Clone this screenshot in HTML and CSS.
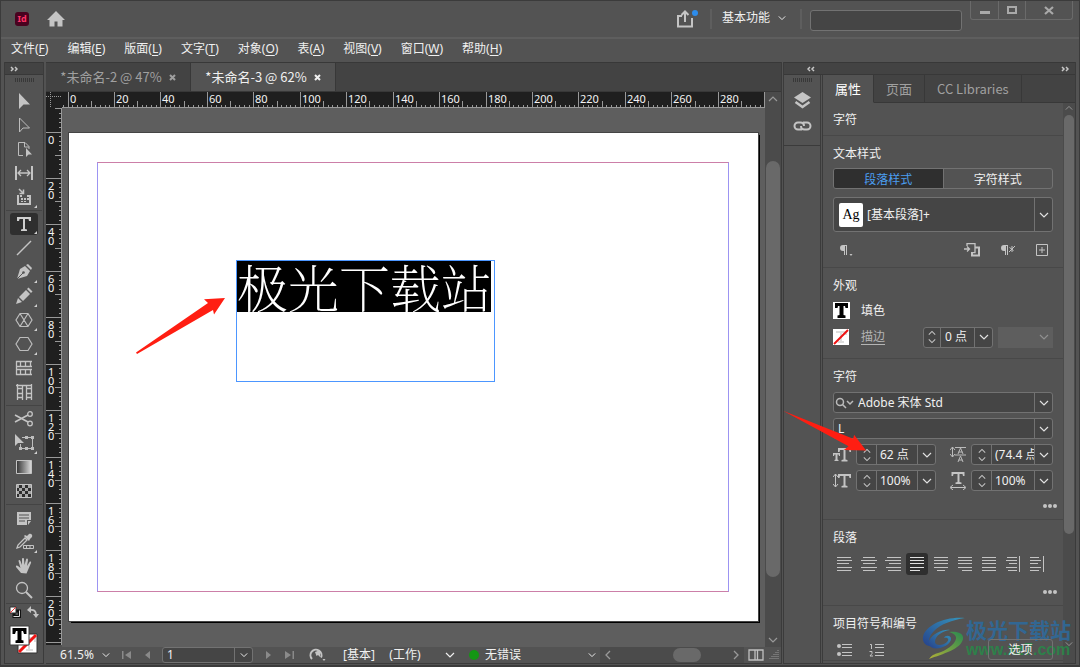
FILE: index.html
```html
<!DOCTYPE html>
<html lang="zh-CN">
<head>
<meta charset="utf-8">
<title>InDesign</title>
<link rel="stylesheet" href="styles.css">
</head>
<body>
<svg class="defs" aria-hidden="true">
  <symbol id="chev" viewBox="0 0 10 6"><path d="M1 1l4 4 4-4" fill="none" stroke="currentColor" stroke-width="1.2"/></symbol>
  <symbol id="step" viewBox="0 0 10 16"><path d="M1 5l4-4 4 4M1 11l4 4 4-4" fill="none" stroke="currentColor" stroke-width="1.3"/></symbol>
  <symbol id="rr" viewBox="0 0 8 6"><path d="M1 1l2 2-2 2M5 1l2 2-2 2" fill="none" stroke="currentColor" stroke-width="1.5"/></symbol>
  <symbol id="ll" viewBox="0 0 8 6"><path d="M3 1L1 3l2 2M7 1L5 3l2 2" fill="none" stroke="currentColor" stroke-width="1.5"/></symbol>
</svg>

<header class="titlebar">
  <span class="logo">Id</span>
  <button class="plain" aria-label="主页"><svg width="18" height="16" viewBox="0 0 18 16"><path d="M9 0L0 9h2.500v6.500h5v-5h3v5h5V9H18z" fill="#c4c4c4"/></svg></button>
  <span class="grow"></span>
  <button class="plain share" aria-label="共享"><svg width="22" height="20" viewBox="0 0 22 20"><path d="M6 7H2v10.500h14V9M9 13V3M5.500 6L9 2.500 12.500 6" fill="none" stroke="#c4c4c4" stroke-width="2"/><circle cx="19" cy="4" r="3" fill="#2d8ceb"/></svg></button>
  <span class="vbar"></span>
  <button class="plain workspace">基本功能 <svg width="8" height="6"><use href="#chev"/></svg></button>
  <span class="vbar"></span>
  <input class="search" type="search" aria-label="搜索">
  <div class="winbtns">
    <button aria-label="最小化"><svg width="10" height="8"><path d="M0 5h10v3H0z" fill="#a9a9a9"/></svg></button>
    <button aria-label="最大化"><svg width="10" height="8"><path d="M1 1h8v6H1z" fill="none" stroke="#a9a9a9" stroke-width="2"/></svg></button>
    <button class="close" aria-label="关闭"><svg width="10" height="9"><path d="M1 1l8 7M9 1L1 8" stroke="#a9a9a9" stroke-width="2.200"/></svg></button>
  </div>
</header>

<nav class="menubar">
  <button>文件(<u>F</u>)</button><button>编辑(<u>E</u>)</button><button>版面(<u>L</u>)</button><button>文字(<u>T</u>)</button><button>对象(<u>O</u>)</button><button>表(<u>A</u>)</button><button>视图(<u>V</u>)</button><button>窗口(<u>W</u>)</button><button>帮助(<u>H</u>)</button>
</nav>

<main class="work">
  <aside class="tools">
    <div class="strip"><svg width="8" height="6"><use href="#rr"/></svg></div>
    <div class="grip"></div>
    <button aria-label="选择工具"><svg width="20" height="20" viewBox="0 0 20 20"><path d="M5 2v16l4.500-4.500H16z" fill="#c4c4c4"/></svg></button>
    <button aria-label="直接选择工具"><svg width="20" height="20" viewBox="0 0 20 20"><path d="M5.500 3v14l3.500-4h6.500z" fill="none" stroke="#bdbdbd"/></svg></button>
    <button aria-label="页面工具"><svg width="20" height="20" viewBox="0 0 20 20"><path d="M9 16.500H4.500v-13H11l4 4V10M10.500 3.500V8H15" fill="none" stroke="#bdbdbd"/><path d="M12 9v9l2.500-2.500H18z" fill="#c4c4c4"/></svg></button>
    <button aria-label="间隙工具"><svg width="20" height="20" viewBox="0 0 20 20"><path d="M2 3v14M18 3v14" stroke="#c4c4c4" stroke-width="2"/><path d="M4 10h12M7 7l-3 3 3 3M13 7l3 3-3 3" fill="none" stroke="#c4c4c4" stroke-width="1.300"/></svg></button>
    <button class="more" aria-label="内容收集器"><svg width="20" height="20" viewBox="0 0 20 20"><path d="M4 8v9h12V8" fill="none" stroke="#c4c4c4" stroke-width="2"/><path d="M7 11h2v2H7zm3 0h2v2h-2zm3-3h2v2h-2zM7 14h2v1H7zm3 0h2v1h-2zm3-3h2v2h-2zM6 8h2v2H6z" fill="#c4c4c4"/><path d="M5 2l4 4M9.500 2.500v4h-4" stroke="#c4c4c4" fill="none" stroke-width="1.500"/></svg></button>
    <hr>
    <button class="more on" aria-label="文字工具"><svg width="20" height="20" viewBox="0 0 20 20"><path d="M3 3h14v4h-2l-.5-2H11v10l2 .5V17H7v-1.500l2-.5V5H5.500L5 7H3z" fill="#d0d0d0"/></svg></button>
    <button aria-label="直线工具"><svg width="20" height="20" viewBox="0 0 20 20"><path d="M3 17L17 3" stroke="#c4c4c4" stroke-width="1.400"/></svg></button>
    <button class="more" aria-label="钢笔工具"><svg width="20" height="20" viewBox="0 0 20 20"><path d="M11 4l5 5-3 5-10 3L6 7z" fill="#c4c4c4"/><path d="M12 3l2-1 4 4-1 2z" fill="#c4c4c4"/><path d="M3 17l6-6" stroke="#535353"/><circle cx="9.500" cy="10.500" r="1.300" fill="#535353"/></svg></button>
    <button class="more" aria-label="铅笔工具"><svg width="20" height="20" viewBox="0 0 20 20"><path d="M2 18l2-6 4 4zM5 11l7-7 4 4-7 7zM13 3l1.500-1.500 4 4L17 7z" fill="#c4c4c4"/></svg></button>
    <button class="more" aria-label="矩形框架工具"><svg width="20" height="20" viewBox="0 0 20 20"><path d="M6 3.500h8l4 6.500-4 6.500H6L2 10zM6 3.500l8 13M14 3.500l-8 13" fill="none" stroke="#bdbdbd" stroke-width="1.200"/></svg></button>
    <button class="more" aria-label="多边形工具"><svg width="20" height="20" viewBox="0 0 20 20"><path d="M6 3.500h8l4 6.500-4 6.500H6L2 10z" fill="none" stroke="#bdbdbd" stroke-width="1.200"/></svg></button>
    <button aria-label="水平网格工具"><svg width="20" height="20" viewBox="0 0 20 20"><path d="M2.500 3v14M2 3.500h16M2 8.500h16M2 11.500h16M2 16.500h16M6.500 4v4M11.500 4v4M16.500 4v4M6.500 12v4M11.500 12v4M16.500 12v4" fill="none" stroke="#c4c4c4" stroke-width="1.300"/></svg></button>
    <button aria-label="垂直网格工具"><svg width="20" height="20" viewBox="0 0 20 20"><path d="M2 3.500h16M3.500 2v16M8.500 3v15M12.500 3v15M17.500 2v16M4 6.500h4M4 11.500h4M4 15.500h4M13 6.500h4M13 11.500h4M13 15.500h4" fill="none" stroke="#c4c4c4" stroke-width="1.300"/></svg></button>
    <hr>
    <button aria-label="剪刀工具"><svg width="20" height="20" viewBox="0 0 20 20"><path d="M1 6l13 7M1 13l13-7" stroke="#c4c4c4" stroke-width="1.600"/><circle cx="16" cy="5" r="2.300" fill="none" stroke="#c4c4c4" stroke-width="1.300"/><circle cx="16" cy="14.500" r="2.300" fill="none" stroke="#c4c4c4" stroke-width="1.300"/></svg></button>
    <button class="more" aria-label="自由变换工具"><svg width="20" height="20" viewBox="0 0 20 20"><path d="M1 1v12l3-3h6z" fill="#c4c4c4"/><path d="M8 4.500h10.500v11H6.500V11" fill="none" stroke="#bdbdbd"/><path d="M17 3h3v3h-3zM17 14h3v3h-3zM5 14h3v3H5zM11 3h3v3h-3zM11 14h3v3h-3z" fill="#bdbdbd"/></svg></button>
    <button aria-label="渐变色板工具"><svg width="20" height="20" viewBox="0 0 20 20"><defs><linearGradient id="g"><stop offset="0" stop-color="#333"/><stop offset="1" stop-color="#ddd"/></linearGradient></defs><path d="M2.500 3.500h15v13h-15z" fill="url(#g)" stroke="#c4c4c4"/></svg></button>
    <button aria-label="渐变羽化工具"><svg width="20" height="20" viewBox="0 0 20 20"><defs><pattern id="ck" width="6" height="6" x="2" y="4" patternUnits="userSpaceOnUse"><path fill="#2f2f2f" d="M0 0h6v6H0z"/><path fill="#a8a8a8" d="M0 0h3v3H0zM3 3h3v3H3z"/></pattern></defs><path d="M2.500 3.500h15v13h-15z" fill="url(#ck)" stroke="#c4c4c4"/></svg></button>
    <hr>
    <button aria-label="附注工具"><svg width="20" height="20" viewBox="0 0 20 20"><path d="M3 4h14v8h-4v5H3z" fill="#c4c4c4"/><path d="M14 13h3l-3 4z" fill="#c4c4c4"/><path d="M5 7h10M5 10h10M5 13h6" stroke="#535353"/></svg></button>
    <button class="more" aria-label="颜色主题工具"><svg width="20" height="20" viewBox="0 0 20 20"><path d="M3 16l1-3 7-7 2 2-7 7z" fill="none" stroke="#c4c4c4" stroke-width="1.300"/><path d="M10 4l5 5 1-2 2-2c1-2-1-4-3-3l-2 2-2-1z" fill="#c4c4c4"/><path d="M9.500 13.500h10v3h-10zM12.500 13v4M16 13v4" fill="none" stroke="#c4c4c4"/></svg></button>
    <button aria-label="抓手工具"><svg width="20" height="20" viewBox="0 0 20 20"><path d="M7 17l-5-6c-.5-1.500 1-2 2-1l2.500 2L4.500 5c0-1.500 1.500-1.500 2 0L8 9 8 3c0-1.500 2-1.500 2 0l.5 6L12 3.500c.5-1.500 2-1 2 .5L13 10l2.500-4c1-1 2 0 1.500 1l-3 7-1.500 3.500z" fill="#c4c4c4"/></svg></button>
    <button aria-label="缩放显示工具"><svg width="20" height="20" viewBox="0 0 20 20"><circle cx="8" cy="8" r="5.500" fill="none" stroke="#c4c4c4" stroke-width="1.300"/><path d="M12 12l6 6" stroke="#c4c4c4" stroke-width="2"/></svg></button>
    <hr>
    <div class="mini">
      <svg width="12" height="12" viewBox="0 0 12 12"><path d="M5 5h5.500v5.500H5z" fill="none" stroke="#111" stroke-width="3"/><path d="M4.500 10.500h6v-6" fill="none" stroke="#ddd"/><path d="M1 1h6v6H1z" fill="#fff" stroke="#333"/><path d="M1 7l6-6" stroke="#e33"/></svg>
      <svg width="12" height="12" viewBox="0 0 12 12"><path d="M3 4c4-.5 6 1 6 5" fill="none" stroke="#c4c4c4" stroke-width="1.800"/><path d="M0 4l4-4v7zM6 8h6l-3 4z" fill="#c4c4c4"/></svg>
    </div>
    <div class="swatches"><svg width="30" height="30" viewBox="0 0 30 30"><path d="M9 9h19v19H9z" fill="#fff" stroke="#333"/><path d="M14 13h12v4M20 13v12M17 25h7" fill="none" stroke="#ddd" stroke-width="2"/><path d="M10 27L27 10" stroke="#f01414" stroke-width="3"/><path d="M1 1h19v19H1z" fill="#fff" stroke="#3b3b3b"/><path d="M3.500 3h14v6H15l-1-3h-1.500v9l2 .5V18h-8v-2.500l2-.5V6H7L6 9H3.500z" fill="#000"/></svg></div>
  </aside>

  <section class="doc">
    <div class="tabs" role="tablist">
      <button role="tab">*未命名-2 @ 47% <svg width="7" height="7"><path d="M1 1l5 5M6 1L1 6" stroke="currentColor" stroke-width="2"/></svg></button>
      <button role="tab" class="on">*未命名-3 @ 62% <svg width="7" height="7"><path d="M1 1l5 5M6 1L1 6" stroke="currentColor" stroke-width="2"/></svg></button>
    </div>
    <div class="canvas">
      <div class="corner"><svg width="15" height="15"><path d="M0 4.500h15M4.500 0v15" stroke="#999" stroke-dasharray="1 1"/></svg></div>
      <svg class="hruler" id="hruler"></svg>
      <div class="vscroll"><svg width="10" height="6" class="flip"><use href="#chev"/></svg><div class="track"><i></i></div><svg width="10" height="6"><use href="#chev"/></svg></div>
      <svg class="vruler" id="vruler"></svg>
      <div class="board">
        <div class="page">
          <div class="margins"></div>
          <div class="frame"><span>极光下载站</span></div>
          <svg class="arrow1" width="90" height="56" viewBox="0 0 90 56"><path d="M0 54.500L72 5 68 1.200 89 0 78 16.500 77 12 1 56z" fill="#ff1e12"/></svg>
        </div>
      </div>
    </div>
    <footer class="status">
      <button class="zoomlvl">61.5% <svg width="8" height="6"><use href="#chev"/></svg></button>
      <button class="dim" aria-label="第一页"><svg width="9" height="8"><path d="M0 0h1.500v8H0zM9 0v8L3 4z" fill="#8a8a8a"/></svg></button>
      <button class="dim" aria-label="上一页"><svg width="5" height="8"><path d="M5 0v8L0 4z" fill="#8a8a8a"/></svg></button>
      <div class="field pageno"><input value="1" aria-label="页码"><button aria-label="页面列表"><svg width="8" height="6"><use href="#chev"/></svg></button></div>
      <button class="dim" aria-label="下一页"><svg width="5" height="8"><path d="M0 0v8l5-4z" fill="#8a8a8a"/></svg></button>
      <button class="dim" aria-label="最后一页"><svg width="9" height="8"><path d="M7.500 0H9v8H7.500zM0 0v8l6-4z" fill="#8a8a8a"/></svg></button>
      <button class="open" aria-label="打开"><svg width="18" height="14" viewBox="0 0 18 14"><path d="M3 11A5.500 5.500 0 1 1 12 9.500" fill="none" stroke="#c4c4c4" stroke-width="2"/><path d="M6 4l5-2v7l-2-2-1.500 1z" fill="#c4c4c4"/><path d="M13.500 11h3l-1.500 2z" fill="#c4c4c4"/></svg></button>
      <button class="profile"><span>[基本]</span><span>(工作)</span><svg width="10" height="6"><use href="#chev"/></svg></button>
      <button class="errors"><i></i>无错误<span class="grow"></span><svg width="8" height="6"><use href="#chev"/></svg></button>
      <div class="hscroll"><svg width="6" height="10"><path d="M5 1L1 5l4 4" fill="none" stroke="#999" stroke-width="1.300"/></svg><i></i><svg width="6" height="10"><path d="M1 1l4 4-4 4" fill="none" stroke="#999" stroke-width="1.300"/></svg></div>
      <button class="split" aria-label="拆分版面"><svg width="16" height="12"><path d="M1 1h14v10H1zM7 1v10M9.500 1v10" fill="none" stroke="#c0c0c0" stroke-width="1.300"/></svg></button>
      <svg class="resize" width="10" height="10"><path d="M9 0v10M7 2v8M5 4v6M3 6v4M1 8v2" stroke="#999" stroke-dasharray="1 1"/></svg>
    </footer>
  </section>

  <aside class="right">
    <div class="strip"><svg width="8" height="6"><use href="#ll"/></svg><span class="grow"></span><svg width="8" height="6"><use href="#rr"/></svg></div>
    <div class="cols">
      <div class="dock">
        <div class="dockgroup">
          <div class="grip"></div>
          <button aria-label="图层"><svg width="17" height="17" viewBox="0 0 17 17"><path d="M8.500 0L17 5.500 8.500 11 0 5.500z" fill="#c4c4c4"/><path d="M1.500 10l7 5 7-5" fill="none" stroke="#c4c4c4" stroke-width="2.500"/></svg></button>
          <button aria-label="链接"><svg width="19" height="10" viewBox="0 0 19 10"><path d="M9 8.500H5a3.500 3.500 0 0 1 0-7h2.500c2 0 3.500 1.500 3.500 3.500M10 1.500h4a3.500 3.500 0 0 1 0 7h-2.500C9.500 8.500 8 7 8 5" fill="none" stroke="#c4c4c4" stroke-width="2"/></svg></button>
        </div>
      </div>
      <div class="panel">
        <div class="ptabs" role="tablist"><button role="tab" class="on">属性</button><button role="tab">页面</button><button role="tab">CC Libraries</button></div>
        <div class="pbody">
          <div class="psecs">
            <section class="s-head"><h2>字符</h2></section>
            <section class="s-style">
              <h2>文本样式</h2>
              <div class="seg"><button class="on">段落样式</button><button>字符样式</button></div>
              <div class="field para"><b>Ag</b><select aria-label="段落样式"><option>[基本段落]+</option></select><span class="car"><svg width="10" height="6"><use href="#chev"/></svg></span></div>
              <div class="row icons">
                <button aria-label="段落标记"><svg width="14" height="14" viewBox="0 0 14 14"><path d="M8 2H4a3 3 0 0 0 0 6h1v4h1V3h1v9h1z" fill="#c4c4c4"/><path d="M10.500 11h3L12 13z" fill="#c4c4c4"/></svg></button>
                <span class="grow"></span>
                <button aria-label="重新定义"><svg width="16" height="14" viewBox="0 0 16 14"><path d="M3 3V.7h8v9H9M0 6h5M3 3.500L5.500 6 3 8.500" fill="none" stroke="#c4c4c4" stroke-width="1.300"/><path d="M11 4.500h4v8H8V9" fill="none" stroke="#c4c4c4" stroke-width="2"/></svg></button>
                <button aria-label="清除优先选项"><svg width="16" height="14" viewBox="0 0 16 14"><path d="M8 2H4a3 3 0 0 0 0 6h1v4h1V3h1v9h1z" fill="#c4c4c4"/><path d="M9 9l6-6M9.500 4.500l4 3M12 3v6" stroke="#c4c4c4"/></svg></button>
                <button aria-label="新建样式"><svg width="12" height="12"><path d="M.5.5h11v11H.5zM6 3v6M3 6h6" fill="none" stroke="#c4c4c4"/></svg></button>
              </div>
            </section>
            <section class="s-look">
              <h2>外观</h2>
              <div class="row fill"><svg width="17" height="17"><path d="M0 0h17v17H0z" fill="#fff"/><path d="M2 1h13v5h-2.500L12 4h-1.500v9l2 .5V16h-8v-2.500l2-.5V4H5l-.5 2H2z"/></svg><span>填色</span></div>
              <div class="row stroke">
                <svg width="17" height="17"><path d="M0 0h16v16H0z" fill="#fff"/><path d="M3 3h10v3M8 3v10M5 13h6" fill="none" stroke="#ddd" stroke-width="2"/><path d="M1 15L15 1" stroke="#e11" stroke-width="2"/></svg>
                <a href="#stroke">描边</a><span class="grow"></span>
                <div class="field num"><button class="st" aria-label="调整"><svg width="8" height="14"><use href="#step"/></svg></button><input value="0 点" aria-label="描边粗细"><button class="car" aria-label="列表"><svg width="10" height="6"><use href="#chev"/></svg></button></div>
                <button class="off" aria-label="描边类型"><svg width="10" height="6"><use href="#chev"/></svg></button>
              </div>
            </section>
            <section class="s-char">
              <h2>字符</h2>
              <div class="field"><svg class="mag" width="19" height="13" viewBox="0 0 19 13"><circle cx="5" cy="5" r="3.500" fill="none" stroke="#bbb" stroke-width="1.500"/><path d="M7.500 7.500L11 11M12 4l3 3 3-3" fill="none" stroke="#bbb" stroke-width="1.500"/></svg><input value="Adobe 宋体 Std" aria-label="字体"><button class="car" aria-label="字体列表"><svg width="10" height="6"><use href="#chev"/></svg></button></div>
              <div class="field lone"><input value="L" aria-label="字体样式"><button class="car" aria-label="样式列表"><svg width="10" height="6"><use href="#chev"/></svg></button></div>
              <div class="metrics">
                <svg width="18" height="17" viewBox="0 0 18 17"><path d="M5 2h13v4h-1.500L16 4h-3.500v9.500l2 .5v1.500h-6V14l2-.5V4H7l-.5 2H5zM0 7h7v3H6l-.5-1.500h-1v5l1 .5v1h-4v-1l1-.5v-5h-1L1 10H0z" fill="#c4c4c4"/></svg>
                <div class="field num"><button class="st" aria-label="调整"><svg width="8" height="14"><use href="#step"/></svg></button><input value="62 点" aria-label="字体大小"><button class="car" aria-label="列表"><svg width="10" height="6"><use href="#chev"/></svg></button></div>
                <svg width="16" height="17" viewBox="0 0 16 17"><path d="M5 1.500h11M5 9h11M2.500 1v10M0 4l2.500-3L5 4M0 8l2.500 3L5 8M8 8l2.500-6L13 8M8.500 6h4M8 16l2.500-6 2.500 6M8.500 14h4" fill="none" stroke="#bbb"/></svg>
                <div class="field num"><button class="st" aria-label="调整"><svg width="8" height="14"><use href="#step"/></svg></button><input value="(74.4 点)" aria-label="行距"><button class="car" aria-label="列表"><svg width="10" height="6"><use href="#chev"/></svg></button></div>
                <svg width="18" height="17" viewBox="0 0 18 17"><path d="M5 2h13v4h-1.500L16 4h-3.500v9.500l2 .5v1.500h-6V14l2-.5V4H7l-.5 2H5z" fill="#c4c4c4"/><path d="M2.500 2v13M0 5l2.500-3L5 5M0 12l2.500 3L5 12" fill="none" stroke="#c4c4c4"/></svg>
                <div class="field num"><button class="st" aria-label="调整"><svg width="8" height="14"><use href="#step"/></svg></button><input value="100%" aria-label="垂直缩放"><button class="car" aria-label="列表"><svg width="10" height="6"><use href="#chev"/></svg></button></div>
                <svg width="16" height="18" viewBox="0 0 16 18"><path d="M1.500 0h13v4H13l-.5-2H9.500v8l2 .5V12h-6v-1.500l2-.5V2h-4L3 4H1.500z" fill="#c4c4c4"/><path d="M1 15.500h14M3 13l-3 2.500L3 18M13 13l3 2.500-3 2.500" fill="none" stroke="#c4c4c4"/></svg>
                <div class="field num"><button class="st" aria-label="调整"><svg width="8" height="14"><use href="#step"/></svg></button><input value="100%" aria-label="水平缩放"><button class="car" aria-label="列表"><svg width="10" height="6"><use href="#chev"/></svg></button></div>
              </div>
              <button class="dots" aria-label="更多选项"><i></i><i></i><i></i></button>
            </section>
            <section class="s-par">
              <h2>段落</h2>
              <div class="aligns">
                <button aria-label="左对齐"><svg width="16" height="14"><path d="M0 .5h14M0 3.500h15M0 6.500h12M0 10.500h15M0 13.500h14" stroke="#c4c4c4"/></svg></button>
                <button aria-label="居中对齐"><svg width="16" height="14"><path d="M2 .5h12M0 3.500h16M2 6.500h12M0 10.500h16M2 13.500h12" stroke="#c4c4c4"/></svg></button>
                <button aria-label="右对齐"><svg width="16" height="14"><path d="M2 .5h14M0 3.500h16M4 6.500h12M1 10.500h15M3 13.500h13" stroke="#c4c4c4"/></svg></button>
                <button class="on" aria-label="双齐末行齐左"><svg width="14" height="14"><path d="M0 .5h14M0 3.500h14M0 6.500h14M0 10.500h14M0 13.500h10" stroke="#e0e0e0"/></svg></button>
                <button aria-label="双齐末行居中"><svg width="14" height="14"><path d="M0 .5h14M0 3.500h14M0 6.500h14M0 10.500h14M3 13.500h8" stroke="#c4c4c4"/></svg></button>
                <button aria-label="双齐末行齐右"><svg width="14" height="14"><path d="M0 .5h14M0 3.500h14M0 6.500h14M0 10.500h14M4 13.500h10" stroke="#c4c4c4"/></svg></button>
                <button aria-label="全部强制双齐"><svg width="14" height="14"><path d="M0 .5h14M0 3.500h14M0 6.500h14M0 10.500h14M0 13.500h14" stroke="#c4c4c4"/></svg></button>
                <button aria-label="朝向书脊对齐"><svg width="14" height="16"><path d="M1 1.500h10M0 4.500h11M3 7.500h8M0 11.500h11M2 14.500h9M13.500 0v16" stroke="#c4c4c4"/></svg></button>
                <button aria-label="背向书脊对齐"><svg width="14" height="16"><path d="M0 1.500h9M0 4.500h11M0 7.500h8M0 11.500h11M0 14.500h9M13.500 0v16" stroke="#c4c4c4"/></svg></button>
              </div>
              <button class="dots" aria-label="更多选项"><i></i><i></i><i></i></button>
            </section>
            <section class="s-list">
              <h2>项目符号和编号</h2>
              <div class="row">
                <button aria-label="项目符号列表"><svg width="16" height="14"><path d="M5 1.500h10M5 4.500h10M5 9.500h10M5 12.500h10" stroke="#c4c4c4"/><circle cx="2" cy="3" r="2" fill="#c4c4c4"/><circle cx="2" cy="11" r="2" fill="#c4c4c4"/></svg></button>
                <button aria-label="编号列表"><svg width="16" height="14"><path d="M6 1.500h9M6 4.500h9M6 9.500h9M6 12.500h9M1 1.500h1.500V6M.5 8.500h2.500v2l-2 2.500H4" stroke="#c4c4c4" fill="none"/></svg></button>
                <span class="grow"></span>
                <button class="opt">选项</button>
              </div>
            </section>
          </div>
          <div class="pscroll"><svg width="8" height="6" class="flip"><use href="#chev"/></svg><div class="track"><i></i></div><svg width="8" height="6"><use href="#chev"/></svg></div>
        </div>
      </div>
    </div>
    <svg class="arrow2" width="91" height="44" viewBox="0 0 91 44"><path d="M0 0L76 30.500 77 26 90 43 66 42.500 71 38.500z" fill="#ff1e12"/></svg>
    <div class="mark">
      <svg width="44" height="42" viewBox="0 0 44 42"><defs><linearGradient id="ma" x1="0" y1="1" x2="1" y2="0"><stop offset="0" stop-color="#1c3f9a"/><stop offset="1" stop-color="#2fa8d8"/></linearGradient><linearGradient id="mb" x1="0" y1="1" x2="1" y2="0"><stop offset="0" stop-color="#c8c832"/><stop offset="1" stop-color="#1f9a50"/></linearGradient></defs><path d="M43 1C24-1 3 8 1 20c-1 6 4 10 9 9-4-4-4-9 2-15C19 7 30 3 43 1z" fill="url(#ma)"/><path d="M7 24c4-8 14-12 21-11-8 1-15 6-15 12 0 4 8 4 12 0 3-3 0-5-3-4 1-3 7-3 7 1 0 6-12 11-18 9-3-1-5-4-4-7z" fill="url(#ma)"/><path d="M27 15c8-1 15 1 14 7-2 10-20 15-34 20 4-5 6-5 12-7 8-3 16-10 15-15-1-3-4-4-7-5z" fill="url(#mb)"/></svg>
      <div><b>极光下载站</b><span>www.xz7.com</span></div>
    </div>
  </aside>
</main>
<script src="rulers.js"></script>
</body>
</html>
```

FILE: rulers.js
```js
const NS = "http://www.w3.org/2000/svg";
const STEP = 4.645;

function add(svg, name, attrs, text) {
  const el = document.createElementNS(NS, name);
  for (const k in attrs) el.setAttribute(k, attrs[k]);
  if (text) el.textContent = text;
  svg.appendChild(el);
}

function drawRuler(svg, vertical, origin) {
  svg.replaceChildren();
  const length = vertical ? svg.clientHeight : svg.clientWidth;
  for (let i = -Math.floor(origin / STEP); origin + i * STEP < length; i++) {
    const p = Math.floor(origin + i * STEP);
    const major = i % 10 === 0;
    const size = major ? 16 : i % 5 === 0 ? 6 : 2;
    add(svg, "rect", vertical
      ? { x: 15 - size, y: p, width: size, height: 1 }
      : { x: p, y: 15 - size, width: 1, height: size });
    if (!major || p + 30 > length) continue;
    const label = String(Math.abs(i * 2));
    if (vertical) {
      [...label].forEach((d, n) => add(svg, "text", { x: 2, y: p + 12 + n * 9 }, d));
    } else {
      add(svg, "text", { x: p + 2, y: 11 }, label);
    }
  }
}

function drawAll() {
  drawRuler(document.getElementById("hruler"), false, 6);
  drawRuler(document.getElementById("vruler"), true, 24);
}
drawAll();
window.addEventListener("resize", drawAll);
```

FILE: styles.css
```css
* { box-sizing: border-box; }
body {
  margin: 0;
  height: 100vh;
  display: flex;
  flex-direction: column;
  overflow: hidden;
  background: #535353;
  border: 1px solid #3b3b3b;
  border-bottom-width: 2px;
  color: #f0f0f0;
  font: 12px/16px "Noto Sans", "Noto Sans CJK SC", sans-serif;
}
button, input, select { font: inherit; color: inherit; margin: 0; padding: 0; border: 0; background: none; border-radius: 0; min-width: 0; }
button { display: flex; align-items: center; justify-content: center; white-space: nowrap; }
select { appearance: none; }
svg { display: block; flex: none; }
h2 { margin: 0; font-size: 12px; line-height: 16px; font-weight: 400; }
.defs { position: absolute; width: 0; height: 0; }
.grow { flex: 1; }
.flip { transform: rotate(180deg); }

.titlebar { display: flex; align-items: center; height: 38px; flex: none; border-bottom: 2px solid #5e5e5e; padding: 0 6px 0 14px; }
.logo { width: 14px; height: 14px; border-radius: 3px; background: #49021f; color: #ff3366; font-size: 9px; line-height: 13px; font-weight: 700; text-align: center; margin-right: 18px; }
.share { margin-right: 12px; }
.vbar { width: 2px; height: 20px; background: #5e5e5e; }
.workspace { gap: 8px; margin: 0 14px 2px 10px; }
.search { width: 152px; height: 21px; margin: 2px 8px 0; background: #454545; border: 1px solid #727272; border-radius: 3px; }
.winbtns { display: flex; align-self: flex-start; height: 19px; border: 1px solid #6a6a6a; border-top: 0; border-radius: 0 0 3px 3px; }
.winbtns button { width: 27px; }
.winbtns button + button { border-left: 1px solid #6a6a6a; }
.winbtns .close { width: 47px; }

.menubar { display: flex; gap: 19px; padding: 0 10px 3px; height: 23px; flex: none; }
.menubar u { text-underline-offset: 2px; }

.work { flex: 1; min-height: 0; display: flex; gap: 2px; padding: 0 3px 1px; }
.strip { height: 13px; flex: none; background: #434343; border-top: 1px solid #383838; border-bottom: 1px solid #383838; display: flex; align-items: center; padding: 0 5px; color: #c8c8c8; }
.grip { width: 19px; height: 4px; margin: 3px auto; background: repeating-linear-gradient(90deg, #383838 0 1px, #535353 1px 2px); }

.tools { width: 40px; flex: none; border: 1px solid #3b3b3b; border-top: 0; display: flex; flex-direction: column; }
.tools .grip { margin-bottom: 7px; flex: none; }
.tools > button { height: 24px; width: 28px; margin: 0 auto; position: relative; border-radius: 3px; flex: none; }
.tools > button.on { background: #2f2f2f; height: 22px; margin: 1px auto; }
.tools .more::after { content: ""; position: absolute; right: 1px; bottom: 1px; border: solid transparent; border-width: 3px 0 0 3px; border-right: 0; border-bottom: 3px solid #d0d0d0; border-top: 0; }
.tools hr { width: 36px; height: 1px; margin: 1px auto; border: 0; background: #444; flex: none; }
.mini { display: flex; justify-content: space-between; padding: 1px 4px 0; height: 20px; }
.swatches { padding-left: 4px; }

.doc { flex: 1; min-width: 0; margin-right: -1px; display: flex; flex-direction: column; border-right: 1px solid #3b3b3b; }
.tabs { display: flex; height: 30px; flex: none; background: #434343; border-top: 1px solid #383838; border-bottom: 1px solid #383838; }
.tabs button { width: 145px; gap: 7px; color: #a0a0a0; border-right: 1px solid #383838; font: 13px/16px "Noto Sans CJK SC", sans-serif; }
.tabs .on { background: #535353; color: #f0f0f0; }
.canvas { flex: 1; min-height: 0; display: grid; grid-template: 16px 1fr / 16px 1fr 16px; }
.corner { background: #1f1f1f; }
.hruler, .vruler { background: #1f1f1f; fill: #999; font: 11px "Noto Sans", sans-serif; width: 100%; height: 100%; shape-rendering: crispEdges; }
.hruler { border-bottom: 1px solid #999; }
.vruler { border-right: 1px solid #999; height: calc(100% - 2px); }
.hruler text, .vruler text { fill: #f4f4f4; }
.vscroll { grid-column: 3; grid-row: 1 / 3; background: #4b4b4b; color: #999; display: flex; flex-direction: column; align-items: center; padding: 4px 0; }
.vscroll .track { flex: 1; width: 14px; padding: 59px 0 60px; display: flex; }
.track i { flex: 1; border-radius: 7px; background: #696969; }
.board { background: #5e5e5e; padding: 25px 7px 26px; display: flex; min-width: 0; }
.page { flex: 1; position: relative; background: #fff; padding: 29px 29px 29px 28px; display: flex; outline: 1px solid #444; box-shadow: 2px 2px 0 #000; }
.margins { flex: 1; border: 1px solid; border-color: #cc7fa8 #9c94f2; }
.frame { position: absolute; left: 167px; top: 127px; width: 259px; height: 122px; border: 1px solid #4c96ff; }
.frame span { display: block; width: 254px; height: 51px; background: #000; color: #fff; font: 100 51px/50px "Noto Serif CJK SC", "Noto Sans CJK SC", serif; white-space: nowrap; }
.arrow1 { position: absolute; left: 67px; top: 165px; }

.status { height: 17px; flex: none; display: flex; align-items: center; border-bottom: 1px solid #3b3b3b; }
.zoomlvl { gap: 8px; margin-left: 14px; width: 50px; }
.dim { width: 21px; }
.dim:first-of-type { margin-left: 5px; }
.field { display: flex; height: 21px; background: #454545; border: 1px solid #727272; border-radius: 3px; overflow: hidden; }
.field input, .field select { flex: 1; width: 0; padding-left: 4px; font-size: 12px; }
.car, .pageno button { width: 18px; flex: none; display: flex; align-items: center; justify-content: center; border-left: 1px solid #727272; }
.zoomlvl + .dim { margin-left: 6px; }
.pageno { width: 91px; height: 16px; margin: 0 5px 0 4px; }
.open { margin-left: 9px; }
.profile { margin-left: 16px; gap: 13px; width: 112px; justify-content: space-between; }
.profile svg { margin-left: 10px; }
.errors { margin-left: 14px; flex: 1; gap: 6px; padding-right: 4px; }
.errors i { width: 10px; height: 10px; border-radius: 5px; background: #149614; }
.hscroll { width: 144px; height: 16px; background: #4b4b4b; display: flex; align-items: center; justify-content: space-between; padding: 0 5px; }
.hscroll i { width: 28px; height: 14px; border-radius: 7px; background: #696969; margin-left: 30px; }
.split { margin-left: 4px; }
.resize { margin: 0 2px 0 5px; }

.right { width: 293px; flex: none; position: relative; display: flex; flex-direction: column; border: 1px solid #3b3b3b; border-top: 0; }
.right .strip { padding: 0 6px 0 23px; }
.cols { flex: 1; min-height: 0; display: flex; }
.dock { width: 37px; border-right: 1px solid #3b3b3b; }
.dockgroup { height: 68px; border-bottom: 1px solid #3b3b3b; }
.dockgroup button { width: 100%; height: 26px; }
.dockgroup .grip { margin-bottom: 5px; }
.panel { flex: 1; min-width: 0; margin-left: 1px; border-left: 1px solid #3b3b3b; display: flex; flex-direction: column; }
.ptabs { display: flex; height: 28px; flex: none; background: #434343; }
.ptabs::after { content: ""; flex: 1; border-bottom: 1px solid #383838; }
.ptabs button { padding: 0 12px; font: 13px/20px "Noto Sans CJK SC", sans-serif; color: #a0a0a0; border-right: 1px solid #383838; border-bottom: 1px solid #383838; }
.ptabs .on { background: #535353; color: #fff; border-bottom-color: #535353; }
.pbody { flex: 1; min-height: 0; display: flex; overflow: hidden; }
.psecs { flex: 1; min-width: 0; overflow: hidden; }
.psecs section { padding: 10px 10px 0; border-bottom: 1px solid #484848; display: flex; flex-direction: column; }
.row { display: flex; align-items: center; }
.psecs .s-head { padding: 9px 10px 7px; }
.s-style h2 { margin-bottom: 6px; }
.seg { display: flex; height: 21px; border: 1px solid #727272; border-radius: 3px; overflow: hidden; margin-bottom: 8px; }
.seg button { flex: 1; padding-top: 2px; }
.seg .on { background: #2f2f2f; color: #4b9ef0; border-right: 1px solid #727272; }
.para { height: 35px; align-items: center; padding-left: 5px; }
.para b { width: 24px; height: 24px; border-radius: 2px; background: #fff; color: #000; font: 14px/24px "Liberation Serif", serif; text-align: center; }
.para .car { align-self: stretch; }
.icons { height: 35px; gap: 20px; padding: 0 5px 0 6px; }
.s-look h2 { margin-bottom: 8px; }
.row span, .row a { color: #f0f0f0; }
.fill, .stroke { gap: 11px; }
.stroke { margin: 5px 0 8px; height: 26px; }
.row.stroke a { color: #b4b4b4; text-underline-offset: 3px; }
.stroke .field { width: 70px; margin-right: -6px; }
.off { width: 55px; height: 21px; background: #5e5e5e; color: #909090; justify-content: flex-end; padding-right: 4px; }
.s-char { gap: 5px; }
.s-char h2 { margin-bottom: 2px; }
.mag { margin: 4px 0 0 1px; }
.field .st { width: 17px; flex: none; border-right: 1px solid #727272; color: #c4c4c4; }
.field .car { color: #e0e0e0; }
.metrics { display: grid; grid-template-columns: 20px 80px 1fr 82px; gap: 5px 3px; align-items: center; justify-items: end; }
.metrics .field { width: 100%; }
.metrics .st { width: 20px; }
.metrics input { padding-left: 3px; }
.metrics > svg { justify-self: start; }
.metrics > svg:nth-of-type(even) { justify-self: end; margin-right: 2px; }
.dots { align-self: flex-end; gap: 1px; height: 14px; }
.dots i { width: 4px; height: 4px; border-radius: 2px; background: #c4c4c4; }
.s-char .dots { margin: 3px -4px 6px 0; }
.aligns { display: flex; margin: 7px 0 0; }
.aligns button { width: 24px; height: 22px; border-radius: 3px; }
.aligns .on { width: 22px; margin: 0 1px; background: #2f2f2f; }
.s-par .dots { margin: 10px -4px 6px 0; }
.s-list .row { margin-top: 7px; gap: 16px; padding-left: 4px; }
.s-list .opt { width: 65px; height: 21px; border: 1px solid #727272; border-radius: 3px; position: relative; z-index: 2; }
.pscroll { width: 12px; background: #4b4b4b; color: #999; display: flex; flex-direction: column; align-items: center; padding: 2px 0 16px; }
.pscroll .track { flex: 1; width: 10px; padding: 4px 0 107px; display: flex; }
.arrow2 { position: absolute; left: -1px; top: 347px; width: 84px; }
.mark { position: absolute; right: 4px; bottom: 4px; display: flex; opacity: .8; z-index: 1; pointer-events: none; }
.mark div { display: flex; flex-direction: column; }
.mark b { font: 700 21px/24px "Noto Sans CJK SC", sans-serif; color: #2b6da3; }
.mark span { font: 700 16px/18px "Liberation Sans", sans-serif; color: #258c48; }
```
